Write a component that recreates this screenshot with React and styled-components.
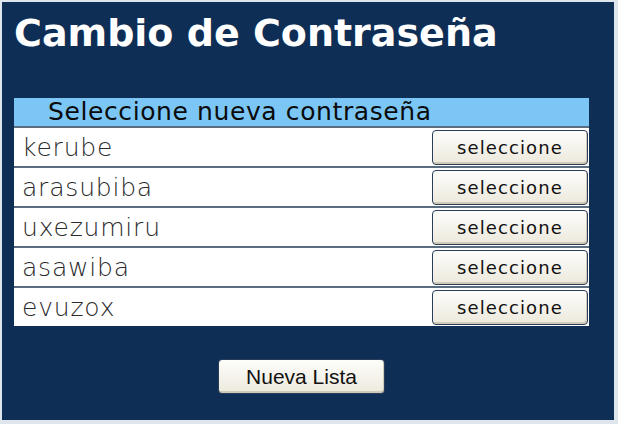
import React from "react";
import styled, { createGlobalStyle } from "styled-components";

const Global = createGlobalStyle`
  html, body { margin: 0; padding: 0; background: #e8ecf0; }
  #root { width: 618px; height: 424px; }
`;

const Frame = styled.div`
  box-sizing: border-box;
  width: 618px;
  height: 424px;
  padding: 2px 4px 4px 2px;
  background: #dfe5ec;
`;

const Panel = styled.div`
  box-sizing: border-box;
  height: 100%;
  background: #0e2e56;
  padding: 8px 25px 0 12px;
  display: flex;
  flex-direction: column;
`;

const Title = styled.h1`
  margin: 0;
  font-family: "DejaVu Sans", Verdana, sans-serif;
  font-weight: bold;
  font-size: 38px;
  line-height: 46px;
  color: #ffffff;
`;

const Table = styled.div`
  margin-top: 42px;
  display: flex;
  flex-direction: column;
  background: #5a6c80;
  gap: 2px;
`;

const Header = styled.div`
  height: 28px;
  background: #7cc6f6;
  font-family: "DejaVu Sans", Tahoma, sans-serif;
  font-size: 25px;
  line-height: 28px;
  color: #0a0a0a;
  padding-left: 34px;
  letter-spacing: 0.6px;
  white-space: nowrap;
`;

const Row = styled.div`
  height: 38px;
  background: #ffffff;
  display: flex;
  align-items: center;
  justify-content: space-between;
  padding: 0 1px 0 8px;
`;

const Word = styled.span`
  font-family: "DejaVu Sans", Tahoma, sans-serif;
  font-weight: 200;
  font-size: 25px;
  color: #2a2a2a;
  letter-spacing: 0.8px;
`;

const Button = styled.button`
  box-sizing: border-box;
  font-family: ${(p) => (p.$big ? '"Liberation Sans", Arial' : '"DejaVu Sans", Tahoma')}, sans-serif;
  font-size: ${(p) => (p.$big ? 21 : 18)}px;
  letter-spacing: ${(p) => (p.$big ? 0 : 1.1)}px;
  color: #111;
  background: linear-gradient(#fdfdfb, #ece9dc);
  border: 1px solid #2a3d5a;
  border-radius: 4px;
  width: ${(p) => p.$w}px;
  height: ${(p) => p.$h}px;
  padding: 0;
  box-shadow: inset -1px -2px 0 #d0cbb8;
`;

const Footer = styled.div`
  display: flex;
  justify-content: center;
  padding-top: 33px;
`;

const words = ["kerube", "arasubiba", "uxezumiru", "asawiba", "evuzox"];

export default function App() {
  return (
    <>
      <Global />
      <Frame>
        <Panel>
          <Title>Cambio de Contraseña</Title>
          <Table>
            <Header>Seleccione nueva contraseña</Header>
            {words.map((w) => (
              <Row key={w}>
                <Word>{w}</Word>
                <Button $w={156} $h={35}>seleccione</Button>
              </Row>
            ))}
          </Table>
          <Footer>
            <Button $big $w={167} $h={35}>Nueva Lista</Button>
          </Footer>
        </Panel>
      </Frame>
    </>
  );
}
